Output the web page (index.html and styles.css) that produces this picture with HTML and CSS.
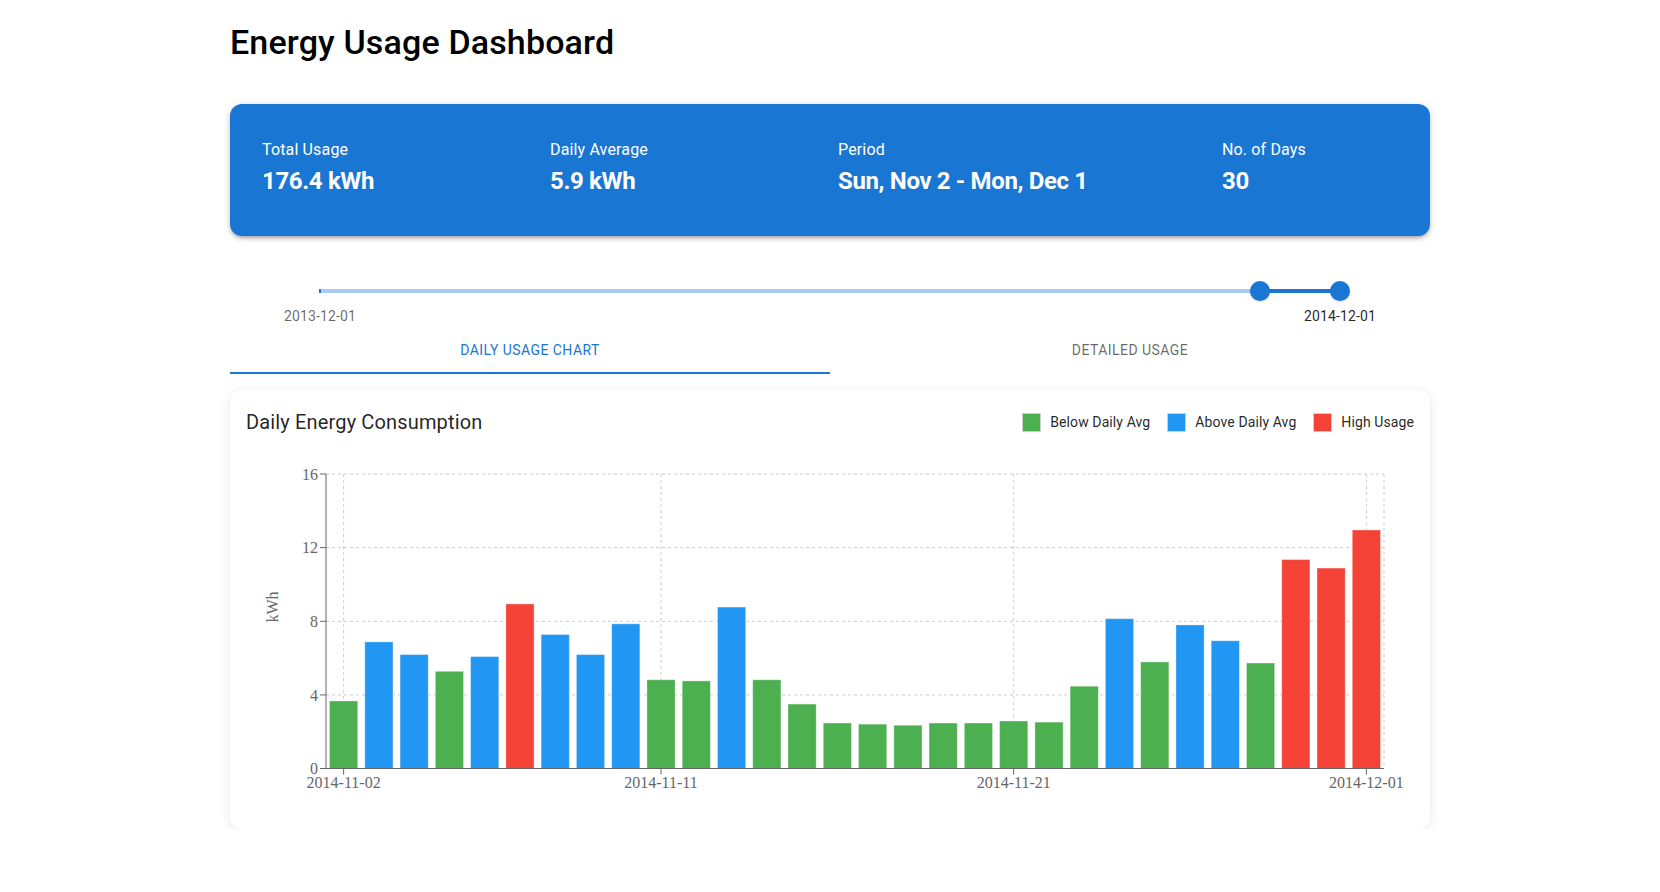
FILE: index.html
```html
<!DOCTYPE html>
<html lang="en">
<head>
<meta charset="utf-8">
<title>Energy Usage Dashboard</title>
<link rel="stylesheet" href="styles.css">
</head>
<body>
<main class="page">
  <h1 class="title">Energy Usage Dashboard</h1>

  <section class="summary">
    <div class="stat">
      <div class="stat-label">Total Usage</div>
      <div class="stat-value">176.4 kWh</div>
    </div>
    <div class="stat">
      <div class="stat-label">Daily Average</div>
      <div class="stat-value">5.9 kWh</div>
    </div>
    <div class="stat">
      <div class="stat-label">Period</div>
      <div class="stat-value">Sun, Nov 2 - Mon, Dec 1</div>
    </div>
    <div class="stat">
      <div class="stat-label">No. of Days</div>
      <div class="stat-value">30</div>
    </div>
  </section>

  <div class="range">
    <div class="slider">
      <span class="rail"></span>
      <span class="track" style="left: 92.15%; width: 7.85%;"></span>
      <span class="mark" style="left: 0%;"></span>
      <span class="thumb" style="left: 92.15%;"></span>
      <span class="thumb" style="left: 100%;"></span>
      <span class="mark-label" style="left: 0%;">2013-12-01</span>
      <span class="mark-label active" style="left: 100%;">2014-12-01</span>
    </div>
  </div>

  <nav class="tabs">
    <button class="tab selected">Daily Usage Chart</button>
    <button class="tab">Detailed Usage</button>
  </nav>

  <section class="chart-card">
    <header class="chart-head">
      <h2 class="chart-title">Daily Energy Consumption</h2>
      <ul class="legend">
        <li class="legend-item"><span class="swatch swatch-green"></span>Below Daily Avg</li>
        <li class="legend-item"><span class="swatch swatch-blue"></span>Above Daily Avg</li>
        <li class="legend-item"><span class="swatch swatch-red"></span>High Usage</li>
      </ul>
    </header>
    <svg class="chart" width="1168" height="375" viewBox="0 0 1168 375">
      <g class="grid">
        <line x1="80" y1="36" x2="1138" y2="36"/>
        <line x1="80" y1="109.6" x2="1138" y2="109.6"/>
        <line x1="80" y1="183.3" x2="1138" y2="183.3"/>
        <line x1="80" y1="256.9" x2="1138" y2="256.9"/>
        <line x1="97.63" y1="36" x2="97.63" y2="330.5"/>
        <line x1="415.03" y1="36" x2="415.03" y2="330.5"/>
        <line x1="767.7" y1="36" x2="767.7" y2="330.5"/>
        <line x1="1120.37" y1="36" x2="1120.37" y2="330.5"/>
        <line x1="1138" y1="36" x2="1138" y2="330.5"/>
      </g>
      <g class="bars">
        <rect class="bar-g" x="83.53" y="262.95" width="28.2" height="67.55"/>
        <rect class="bar-b" x="118.80" y="203.87" width="28.2" height="126.63"/>
        <rect class="bar-b" x="154.07" y="216.57" width="28.2" height="113.93"/>
        <rect class="bar-g" x="189.33" y="233.32" width="28.2" height="97.18"/>
        <rect class="bar-b" x="224.60" y="218.59" width="28.2" height="111.91"/>
        <rect class="bar-r" x="259.87" y="165.95" width="28.2" height="164.55"/>
        <rect class="bar-b" x="295.13" y="196.50" width="28.2" height="134.00"/>
        <rect class="bar-b" x="330.40" y="216.57" width="28.2" height="113.93"/>
        <rect class="bar-b" x="365.67" y="185.83" width="28.2" height="144.67"/>
        <rect class="bar-g" x="400.93" y="241.78" width="28.2" height="88.72"/>
        <rect class="bar-g" x="436.20" y="242.89" width="28.2" height="87.61"/>
        <rect class="bar-b" x="471.47" y="169.08" width="28.2" height="161.42"/>
        <rect class="bar-g" x="506.73" y="241.78" width="28.2" height="88.72"/>
        <rect class="bar-g" x="542.00" y="266.08" width="28.2" height="64.42"/>
        <rect class="bar-g" x="577.27" y="285.04" width="28.2" height="45.46"/>
        <rect class="bar-g" x="612.53" y="286.14" width="28.2" height="44.36"/>
        <rect class="bar-g" x="647.80" y="287.25" width="28.2" height="43.25"/>
        <rect class="bar-g" x="683.07" y="285.04" width="28.2" height="45.46"/>
        <rect class="bar-g" x="718.33" y="285.04" width="28.2" height="45.46"/>
        <rect class="bar-g" x="753.60" y="283.01" width="28.2" height="47.49"/>
        <rect class="bar-g" x="788.87" y="284.12" width="28.2" height="46.38"/>
        <rect class="bar-g" x="824.13" y="248.23" width="28.2" height="82.27"/>
        <rect class="bar-b" x="859.40" y="180.68" width="28.2" height="149.82"/>
        <rect class="bar-g" x="894.67" y="223.93" width="28.2" height="106.57"/>
        <rect class="bar-b" x="929.93" y="186.93" width="28.2" height="143.57"/>
        <rect class="bar-b" x="965.20" y="202.76" width="28.2" height="127.74"/>
        <rect class="bar-g" x="1000.47" y="225.03" width="28.2" height="105.47"/>
        <rect class="bar-r" x="1035.73" y="121.59" width="28.2" height="208.91"/>
        <rect class="bar-r" x="1071.00" y="130.06" width="28.2" height="200.44"/>
        <rect class="bar-r" x="1106.27" y="91.96" width="28.2" height="238.54"/>
      </g>
      <g class="axis">
        <line x1="80" y1="36" x2="80" y2="330.5"/>
        <line x1="80" y1="330.5" x2="1138" y2="330.5"/>
        <line x1="74" y1="36" x2="80" y2="36"/>
        <line x1="74" y1="109.6" x2="80" y2="109.6"/>
        <line x1="74" y1="183.3" x2="80" y2="183.3"/>
        <line x1="74" y1="256.9" x2="80" y2="256.9"/>
        <line x1="74" y1="330.5" x2="80" y2="330.5"/>
        <line x1="97.63" y1="330.5" x2="97.63" y2="336.5"/>
        <line x1="415.03" y1="330.5" x2="415.03" y2="336.5"/>
        <line x1="767.7" y1="330.5" x2="767.7" y2="336.5"/>
        <line x1="1120.37" y1="330.5" x2="1120.37" y2="336.5"/>
      </g>
      <g class="ticks-y">
        <text x="72" y="36" dy="0.355em">16</text>
        <text x="72" y="109.6" dy="0.355em">12</text>
        <text x="72" y="183.3" dy="0.355em">8</text>
        <text x="72" y="256.9" dy="0.355em">4</text>
        <text x="72" y="330.5" dy="0.355em">0</text>
      </g>
      <g class="ticks-x">
        <text x="97.63" y="338.5" dy="0.71em">2014-11-02</text>
        <text x="415.03" y="338.5" dy="0.71em">2014-11-11</text>
        <text x="767.7" y="338.5" dy="0.71em">2014-11-21</text>
        <text x="1120.37" y="338.5" dy="0.71em">2014-12-01</text>
      </g>
      <text class="axis-label" x="26" y="169" transform="rotate(-90 26 169)" dy="0.355em">kWh</text>
    </svg>
  </section>
</main>
</body>
</html>
```

FILE: styles.css
```css
* { box-sizing: border-box; }

html, body {
  margin: 0;
  padding: 0;
  background: #ffffff;
}

body {
  font-family: Roboto, "Liberation Sans", Arial, sans-serif;
  color: rgba(0, 0, 0, 0.87);
}

.page {
  width: 1200px;
  margin: 0 auto;
  padding-top: 21px;
}

.title {
  margin: 0 0 41px;
  font-size: 34px;
  line-height: 42px;
  font-weight: 500;
  color: #000;
  letter-spacing: 0.15px;
}

/* Summary card */
.summary {
  display: grid;
  grid-template-columns: 3fr 3fr 4fr 2fr;
  background: #1976d2;
  color: #fff;
  border-radius: 12px;
  padding: 34px 16px 39px 32px;
  box-shadow: 0 3px 3px -2px rgba(0,0,0,0.2), 0 3px 4px 0 rgba(0,0,0,0.14), 0 1px 8px 0 rgba(0,0,0,0.12);
}

.stat-label {
  font-size: 16px;
  line-height: 24px;
  margin-bottom: 3px;
  letter-spacing: 0.15px;
}

.stat-value {
  font-size: 24px;
  line-height: 32px;
  font-weight: 700;
  letter-spacing: -0.35px;
}

/* Range slider */
.range {
  margin-top: 40px;
  padding: 0 90px;
}

.slider {
  position: relative;
  height: 30px;
  margin-bottom: 20px;
}

.rail {
  position: absolute;
  left: 0;
  right: 0;
  top: 13px;
  height: 4px;
  border-radius: 2px;
  background: #1976d2;
  opacity: 0.38;
}

.track {
  position: absolute;
  top: 13px;
  height: 4px;
  background: #1976d2;
}

.mark {
  position: absolute;
  top: 13px;
  width: 2px;
  height: 4px;
  background: #1976d2;
  transform: translateX(-1px);
}

.thumb {
  position: absolute;
  top: 5px;
  width: 20px;
  height: 20px;
  border-radius: 50%;
  background: #1976d2;
  transform: translateX(-10px);
  box-shadow: 0 1px 2px rgba(0,0,0,0.18);
}

.mark-label {
  position: absolute;
  top: 30px;
  transform: translateX(-50%);
  font-size: 14px;
  line-height: 20px;
  color: rgba(0, 0, 0, 0.6);
  white-space: nowrap;
  letter-spacing: 0.15px;
}

.mark-label.active {
  color: rgba(0, 0, 0, 0.87);
}

/* Tabs */
.tabs {
  display: flex;
  height: 48px;
}

.tab {
  flex: 1;
  border: 0;
  background: transparent;
  font-family: Roboto, "Liberation Sans", Arial, sans-serif;
  font-size: 14px;
  font-weight: 400;
  text-transform: uppercase;
  letter-spacing: 0.45px;
  color: rgba(0, 0, 0, 0.6);
  border-bottom: 2px solid transparent;
  padding: 2px 16px 0;
  cursor: pointer;
}

.tab.selected {
  color: #1976d2;
  border-bottom-color: #1976d2;
}

/* Chart card */
.chart-card {
  margin-top: 16px;
  padding: 16px;
  border-radius: 12px;
  background: #fff;
  box-shadow: 0 2px 12px rgba(0, 0, 0, 0.1);
}

.chart-head {
  display: flex;
  align-items: center;
  justify-content: space-between;
  height: 32px;
}

.chart-title {
  margin: 0;
  font-size: 20px;
  line-height: 32px;
  font-weight: 400;
  color: rgba(0, 0, 0, 0.87);
  letter-spacing: 0.15px;
}

.legend {
  display: flex;
  gap: 17px;
  margin: 0;
  padding: 0;
  list-style: none;
}

.legend-item {
  display: flex;
  align-items: center;
  font-size: 14px;
  line-height: 20px;
  color: rgba(0, 0, 0, 0.87);
  letter-spacing: 0.1px;
}

.swatch {
  width: 19px;
  height: 19px;
  margin-right: 9px;
  border: 1px solid #cfcfcf;
}

.swatch-green { background: #4caf50; }
.swatch-blue { background: #2196f3; }
.swatch-red { background: #f44336; }

.chart {
  display: block;
  font-family: "Liberation Serif", "Times New Roman", serif;
  font-size: 16px;
}

.grid line {
  stroke: #cccccc;
  stroke-dasharray: 3 3;
  stroke-width: 1;
}

.bars rect {
  stroke: rgba(255, 255, 255, 0.35);
  stroke-width: 1;
}

.bar-g { fill: #4caf50; }
.bar-b { fill: #2196f3; }
.bar-r { fill: #f44336; }

.axis line {
  stroke: #666666;
  stroke-width: 1;
}

.ticks-y text {
  fill: #666666;
  text-anchor: end;
}

.ticks-x text {
  fill: #666666;
  text-anchor: middle;
}

.axis-label {
  fill: #666666;
  text-anchor: middle;
}
```
